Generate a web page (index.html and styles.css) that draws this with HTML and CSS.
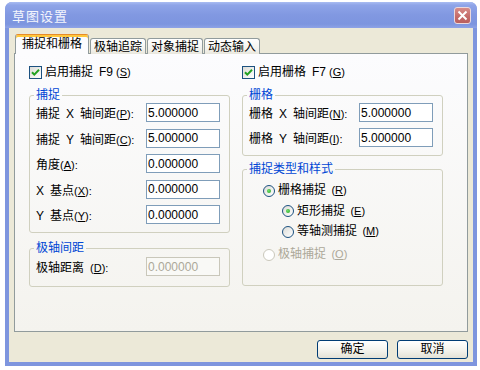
FILE: index.html
```html
<!DOCTYPE html>
<html lang="zh-CN">
<head>
    <meta charset="UTF-8">
    <title>草图设置</title>
    <link rel="stylesheet" href="styles.css">
</head>
<body>
    <div class="window">
        <div class="titlebar">
            <span class="title">草图设置</span>
            <span class="close-btn">
                <svg width="11" height="11" viewBox="0 0 11 11"><path d="M1.5 1.5 L9.5 9.5 M9.5 1.5 L1.5 9.5" stroke="#fff" stroke-width="2" fill="none"/></svg>
            </span>
        </div>

        <div class="client">
            <div class="tabs">
                <div class="tab active">捕捉和栅格</div>
                <div class="tab">极轴追踪</div>
                <div class="tab">对象捕捉</div>
                <div class="tab">动态输入</div>
            </div>

            <div class="tab-panel">
                <!-- 左列：捕捉 -->
                <div class="column">
                    <label class="check-row">
                        <span class="checkbox">
                            <svg width="13" height="13" viewBox="0 0 13 13"><path d="M3 6.2 L5.3 8.6 L10 3.8" stroke="#21a121" stroke-width="2" fill="none"/></svg>
                        </span>
                        启用捕捉&ensp;F9<span class="key">(<u>S</u>)</span>
                    </label>

                    <fieldset class="group group-snap">
                        <legend>捕捉</legend>
                        <div class="field"><span>捕捉&ensp;X&ensp;轴间距<span class="key">(<u>P</u>):</span></span><input class="num" type="text" value="5.000000"></div>
                        <div class="field"><span>捕捉&ensp;Y&ensp;轴间距<span class="key">(<u>C</u>):</span></span><input class="num" type="text" value="5.000000"></div>
                        <div class="field"><span>角度<span class="key">(<u>A</u>):</span></span><input class="num" type="text" value="0.000000"></div>
                        <div class="field"><span>X&ensp;基点<span class="key">(<u>X</u>):</span></span><input class="num" type="text" value="0.000000"></div>
                        <div class="field"><span>Y&ensp;基点<span class="key">(<u>Y</u>):</span></span><input class="num" type="text" value="0.000000"></div>
                    </fieldset>

                    <fieldset class="group group-polar">
                        <legend>极轴间距</legend>
                        <div class="field"><span>极轴距离&ensp;<span class="key">(<u>D</u>):</span></span><input class="num" type="text" value="0.000000" disabled></div>
                    </fieldset>
                </div>

                <!-- 右列：栅格 -->
                <div class="column">
                    <label class="check-row">
                        <span class="checkbox">
                            <svg width="13" height="13" viewBox="0 0 13 13"><path d="M3 6.2 L5.3 8.6 L10 3.8" stroke="#21a121" stroke-width="2" fill="none"/></svg>
                        </span>
                        启用栅格&ensp;F7<span class="key">(<u>G</u>)</span>
                    </label>

                    <fieldset class="group group-grid">
                        <legend>栅格</legend>
                        <div class="field"><span>栅格&ensp;X&ensp;轴间距<span class="key">(<u>N</u>):</span></span><input class="num" type="text" value="5.000000"></div>
                        <div class="field"><span>栅格&ensp;Y&ensp;轴间距<span class="key">(<u>I</u>):</span></span><input class="num" type="text" value="5.000000"></div>
                    </fieldset>

                    <fieldset class="group group-type">
                        <legend>捕捉类型和样式</legend>
                        <div class="radio-row level-1"><span class="radio checked"></span>栅格捕捉&thinsp;<span class="key">(<u>R</u>)</span></div>
                        <div class="radio-row level-2"><span class="radio checked"></span>矩形捕捉&thinsp;<span class="key">(<u>E</u>)</span></div>
                        <div class="radio-row level-2"><span class="radio"></span>等轴测捕捉&thinsp;<span class="key">(<u>M</u>)</span></div>
                        <div class="radio-row level-1 disabled"><span class="radio"></span>极轴捕捉&thinsp;<span class="key">(<u>O</u>)</span></div>
                    </fieldset>
                </div>
            </div>

            <div class="buttons">
                <button class="btn">确定</button>
                <button class="btn">取消</button>
            </div>
        </div>
    </div>
</body>
</html>
```

FILE: styles.css
```css
* {
    margin: 0;
    padding: 0;
    box-sizing: border-box;
}

body {
    background: #fff;
    font-family: "Liberation Sans", "Noto Sans CJK SC", sans-serif;
    font-size: 12px;
    color: #000;
}

u {
    text-decoration: underline;
}

.key {
    font-family: "Liberation Sans", sans-serif;
    font-size: 11px;
}

/* 窗口外框 */
.window {
    width: 472px;
    height: 364px;
    margin: 2px 0 0 5px;
    background: #7e95de;
    border-radius: 7px 7px 0 0;
    display: flex;
    flex-direction: column;
}

.titlebar {
    height: 26px;
    padding: 0 6px 0 7px;
    display: flex;
    align-items: center;
    justify-content: space-between;
    border-radius: 7px 7px 0 0;
    background: linear-gradient(to bottom, #a9bcf2 0%, #8ea4e8 12%, #8198e1 50%, #7d95df 85%, #8ea3e6 100%);
}

.title {
    color: #f4f6fd;
    font-size: 13px;
    letter-spacing: 1px;
}

.close-btn {
    width: 17px;
    height: 17px;
    border: 1px solid #ecd9dc;
    border-radius: 3px;
    background: linear-gradient(to bottom, #d88c88, #c46a68 60%, #b95f5f);
    display: flex;
    align-items: center;
    justify-content: center;
}

.client {
    flex: 1;
    margin: 0 4px 4px;
    padding: 6px 5px 0;
    background: #ece9d8;
}

/* 选项卡 */
.tabs {
    height: 20px;
    margin-bottom: -1px;
    padding-left: 1px;
    display: flex;
    align-items: flex-end;
    gap: 1px;
}

.tab {
    height: 16px;
    padding: 0 3px;
    display: flex;
    align-items: center;
    border: 1px solid #919b9c;
    border-bottom: none;
    border-radius: 3px 3px 0 0;
    background: linear-gradient(to bottom, #ffffff, #f3f2ec 70%, #e9e7dd);
    line-height: 14px;
}

.tab.active {
    height: 20px;
    padding: 0 6px 1px;
    border-top-color: #e68b2c;
    box-shadow: inset 0 2px 0 #ffc83c;
    background: #fcfcfe;
    position: relative;
    z-index: 1;
}

.tab-panel {
    height: 279px;
    border: 1px solid #919b9c;
    background: linear-gradient(to bottom, #fcfcfe, #f4f3ee);
    padding: 12px 0 0 14px;
    display: flex;
    gap: 12px;
}

.column {
    width: 201px;
}

/* 复选框 */
.check-row {
    height: 13px;
    display: flex;
    align-items: center;
    gap: 3px;
    line-height: 13px;
}

.checkbox {
    width: 13px;
    height: 13px;
    border: 1px solid #1c5180;
    background: linear-gradient(135deg, #dcdcd7, #ffffff);
    display: flex;
}

.checkbox svg {
    margin: -1px;
}

/* 分组框 */
.group {
    border: 1px solid #d0d0bf;
    border-radius: 3px;
    padding: 1px 9px 8px 6px;
}

.group legend {
    color: #0046d5;
    line-height: 14px;
    padding: 0 2px;
    margin-left: -2px;
}

.group-snap {
    margin-top: 9px;
}

.group-polar {
    margin-top: 8px;
    padding-top: 2px;
    padding-bottom: 10px;
}

.group-grid {
    margin-top: 9px;
}

.group-type {
    margin-top: 6px;
    padding-top: 8px;
    padding-bottom: 24px;
}

.field {
    height: 19px;
    display: flex;
    align-items: center;
    justify-content: space-between;
}

.group-snap .field + .field {
    margin-top: 6.5px;
}

.group-grid .field + .field {
    margin-top: 6px;
}

.num {
    width: 74px;
    height: 19px;
    border: 1px solid #7f9db9;
    background: #fff;
    padding: 0 1px;
    font-family: "Liberation Sans", sans-serif;
    font-size: 12px;
    color: #000;
    outline: none;
}

.num:disabled {
    border-color: #c9c7ba;
    background: #f9f9f6;
    color: #aca899;
}

/* 单选按钮 */
.radio-row {
    height: 13px;
    display: flex;
    align-items: center;
    gap: 3px;
    line-height: 13px;
}

.radio-row + .radio-row {
    margin-top: 7.5px;
}

.radio-row.disabled {
    margin-top: 10px;
    color: #aca899;
}

.level-1 {
    margin-left: 14px;
}

.level-2 {
    margin-left: 33px;
}

.radio {
    width: 12px;
    height: 12px;
    border: 1px solid #1c5180;
    border-radius: 50%;
    background: linear-gradient(135deg, #dcdcd7, #ffffff);
    display: flex;
    align-items: center;
    justify-content: center;
}

.radio.checked::after {
    content: "";
    width: 4px;
    height: 4px;
    border-radius: 50%;
    background: radial-gradient(circle at 40% 40%, #6fe06a, #21a121);
}

.disabled .radio {
    border-color: #cac8bb;
    background: #fff;
}

/* 底部按钮 */
.buttons {
    margin-top: 8px;
    display: flex;
    justify-content: flex-end;
    gap: 9px;
}

.btn {
    width: 71px;
    height: 19px;
    border: 1px solid #003c74;
    border-radius: 3px;
    background: linear-gradient(to bottom, #ffffff, #f2f1ea 60%, #e3e1d6);
    font-family: "Liberation Sans", "Noto Sans CJK SC", sans-serif;
    font-size: 12px;
    color: #000;
    line-height: 15px;
}
```
